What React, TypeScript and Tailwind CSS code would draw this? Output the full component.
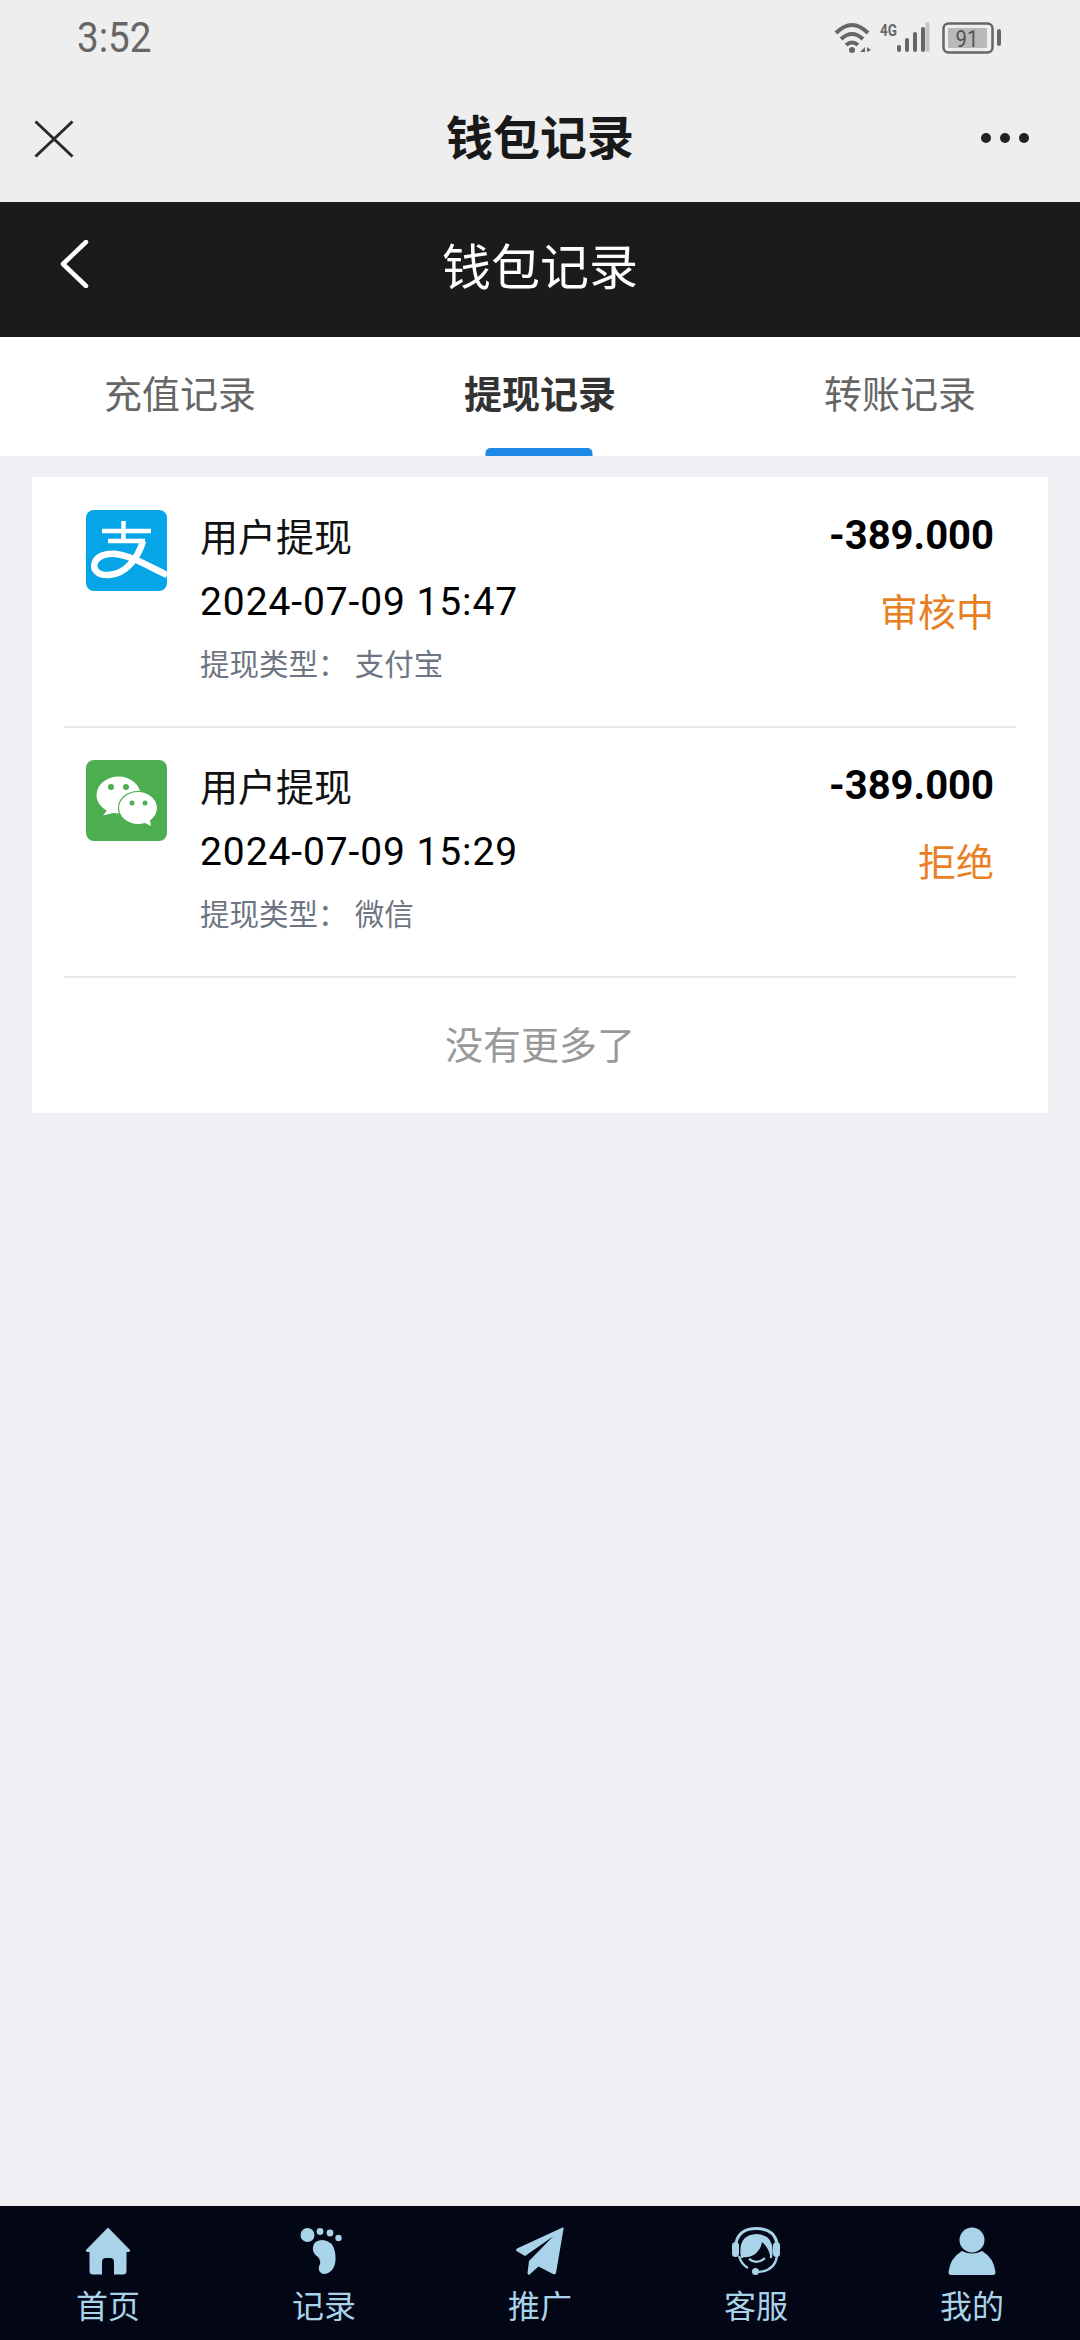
const SANS = "font-['Roboto','Noto_Sans_CJK_SC',sans-serif]";

function Alipay() {
  return (
    <svg viewBox="0 0 81 81" className="w-[81px] h-[81px] shrink-0 mt-[32px]">
      <rect width="81" height="81" rx="8" fill="#06a5e8" />
      <path d="M16 21H65M37.500 11V32M22 31H59" stroke="#fff" strokeWidth="4.500" fill="none" />
      <path d="M57 31C52 48 40 64 23 65C12 65.500 7 60 8.500 54C10 46 20 43 30 44C46 46 62 56 81 65" stroke="#fff" strokeWidth="6.500" fill="none" />
    </svg>
  );
}

function Wechat() {
  return (
    <svg viewBox="0 0 81 81" className="w-[81px] h-[81px] shrink-0 mt-[32px]">
      <rect width="81" height="81" rx="8" fill="#4cae50" />
      <ellipse cx="32.500" cy="35" rx="22" ry="18.500" fill="#fff" />
      <path d="M22 49L17 55.500L31 52Z" fill="#fff" />
      <ellipse cx="52" cy="48" rx="19.500" ry="16.500" fill="#fff" stroke="#4cae50" strokeWidth="1.200" />
      <path d="M57 62L65 66L63.500 58Z" fill="#fff" />
      <circle cx="25" cy="27" r="3" fill="#4cae50" />
      <circle cx="40" cy="27" r="3" fill="#4cae50" />
      <circle cx="46" cy="43" r="2.500" fill="#4cae50" />
      <circle cx="59" cy="43" r="2.500" fill="#4cae50" />
    </svg>
  );
}

function HomeIcon() {
  return (
    <svg viewBox="0 0 48 48" className="w-[48px] h-[48px]">
      <path d="M24 0.500L46 23Q46.500 25 44 25H42.500V44Q42.500 47.500 39 47.500H30V35Q30 31 26 31H22Q18 31 18 35V47.500H9Q5.500 47.500 5.500 44V25H4Q1.500 25 2 23Z" fill="#a8d3e8" />
    </svg>
  );
}
function FootIcon() {
  return (
    <svg viewBox="0 0 48 48" className="w-[48px] h-[48px]">
      <circle cx="7.500" cy="8" r="7" fill="#a8d3e8" />
      <circle cx="20" cy="4.500" r="3.400" fill="#a8d3e8" />
      <circle cx="30" cy="6" r="3.400" fill="#a8d3e8" />
      <circle cx="38.500" cy="11" r="3.200" fill="#a8d3e8" />
      <path d="M13 20Q14 13 23 13Q33 14 35 25Q37 37 32 43Q26 49 21 46Q17 43 20 37Q21 33 18 30Q12 26 13 20Z" fill="#a8d3e8" />
    </svg>
  );
}
function PlaneIcon() {
  return (
    <svg viewBox="0 0 48 48" className="w-[48px] h-[48px]">
      <path d="M46.500 0.500Q48 0 47.500 2L40 46Q39.500 48 37 47L22.500 39.500L13 48Q11.500 47.500 11.500 46L13 34L37 9.500L9 29L0.500 24Q-0.500 22.500 1 21.500Z" fill="#a8d3e8" />
    </svg>
  );
}
function ServiceIcon() {
  return (
    <svg viewBox="0 0 48 48" className="w-[48px] h-[48px]">
      <path d="M4 16Q7 1.500 24.500 1.500Q42 1.500 45 16" stroke="#a8d3e8" strokeWidth="3" fill="none" />
      <path d="M9 31Q5 8 24.500 7Q44 8 40 31Z" fill="#a8d3e8" />
      <path d="M11 30Q21 31 26 24Q29 21 30 15Q36 20 38 28Q38 42 25 43Q14 42 11 30Z" fill="#030615" />
      <path d="M17 32Q25 38 33 31" stroke="#a8d3e8" strokeWidth="2.200" fill="none" />
      <rect x="0" y="15" width="7" height="15" rx="3.500" fill="#a8d3e8" />
      <rect x="41" y="15" width="7" height="15" rx="3.500" fill="#a8d3e8" />
      <path d="M45 29Q43 44 26 45" stroke="#a8d3e8" strokeWidth="2.200" fill="none" />
      <path d="M7 29Q9 37 16 41" stroke="#a8d3e8" strokeWidth="2.200" fill="none" />
      <circle cx="23.500" cy="44.500" r="3.500" fill="#a8d3e8" />
    </svg>
  );
}
function UserIcon() {
  return (
    <svg viewBox="0 0 48 48" className="w-[48px] h-[48px]">
      <circle cx="24" cy="13" r="12.500" fill="#a8d3e8" />
      <path d="M14 24Q24 29 34 24Q46 31 47.500 45Q47.500 48 45 48H3Q0.500 48 0.500 45Q2 31 14 24Z" fill="#a8d3e8" />
    </svg>
  );
}

function Record({ time, kind, status, Icon }: { time: string; kind: string; status: string; Icon: () => React.JSX.Element }) {
  return (
    <div className="flex h-[250px] mx-[32px] border-b-2 border-[#e7e8ea] pl-[22px] pr-[22px]">
      <Icon />
      <div className="ml-[33px] flex-1 flex flex-col items-start">
        <div className="mt-[40px] h-[40px] text-[38px] leading-[40px] text-[#111]">用户提现</div>
        <div className="mt-[24px] h-[40px] text-[39px] leading-[40px] text-black tracking-[0.9px]">{time}</div>
        <div className="mt-[27px] h-[32px] text-[29.500px] leading-[32px] text-[#6e7582]">提现类型： {kind}</div>
      </div>
      <div className="flex flex-col items-end">
        <div className="mt-[38px] h-[40px] text-[40px] leading-[40px] font-bold text-black">-389.000</div>
        <div className="mt-[35px] h-[44px] text-[38px] leading-[44px] text-[#e87f24]">{status}</div>
      </div>
    </div>
  );
}

function NavItem({ label, Icon }: { label: string; Icon: () => React.JSX.Element }) {
  return (
    <div className="flex-1 flex flex-col items-center pt-[21px]">
      <Icon />
      <div className="mt-[14px] text-[32px] leading-[36px] text-[#a8d3e8]">{label}</div>
    </div>
  );
}

export default function App() {
  return (
    <div className={`w-[1080px] h-[2340px] flex flex-col bg-[#efeff4] ${SANS}`}>
      <div className="h-[202px] bg-[#eeeeee] shrink-0 flex flex-col">
        <div className="h-[76px] flex items-center justify-between pl-[77px] pr-[76px]">
          <span className="text-[42px] leading-[42px] text-[#666] font-['Roboto',sans-serif] scale-x-[0.92] origin-left">3:52</span>
          <svg viewBox="830 18 174 38" className="w-[174px] h-[38px]">
            <path d="M836 32Q852 16 868 32M841 38Q852 28 863 38M846 44Q852 39 858 44" stroke="#666" strokeWidth="4" fill="none" />
            <circle cx="852" cy="49" r="3" fill="#666" />
            <path d="M860 51L865 46V51ZM867 46L871 49L867 51Z" fill="#666" />
            <text x="880" y="35" fontSize="17" fontWeight="700" fill="#666" textLength="17" lengthAdjust="spacingAndGlyphs" fontFamily="Roboto, sans-serif">4G</text>
            <rect x="897" y="44" width="4" height="7" rx="2" fill="#666" />
            <rect x="905" y="37" width="4" height="14" rx="2" fill="#666" />
            <rect x="913" y="31" width="4" height="20" rx="2" fill="#666" />
            <rect x="921" y="26" width="4" height="25" rx="2" fill="#666" />
            <rect x="925.500" y="21" width="4" height="30" rx="2" fill="#c4c4c4" />
            <rect x="943.500" y="22.500" width="49" height="29" rx="5" stroke="#666" strokeWidth="2.500" fill="none" />
            <rect x="948" y="27" width="39" height="20" rx="1.500" fill="#b9b9b9" />
            <text x="967" y="46" fontSize="24" fill="#555" textAnchor="middle" textLength="23" lengthAdjust="spacingAndGlyphs" fontFamily="Roboto, sans-serif">91</text>
            <rect x="997" y="28" width="4" height="17" rx="2" fill="#666" />
          </svg>
        </div>
        <div className="h-[126px] flex items-center justify-between pb-[1px]">
          <div className="w-[150px] pl-[34px]">
            <svg viewBox="0 0 40 38" className="w-[40px] h-[38px]"><path d="M1.500 1.500L38.500 36.500M38.500 1.500L1.500 36.500" stroke="#2a2a2a" strokeWidth="3" fill="none" /></svg>
          </div>
          <span className="text-[47px] leading-[50px] font-bold text-[#191919]">钱包记录</span>
          <div className="w-[150px] pr-[50px] flex justify-end">
            <svg viewBox="0 0 50 12" className="w-[50px] h-[12px] -translate-y-[1px]"><circle cx="6" cy="6" r="5" fill="#222" /><circle cx="25" cy="6" r="5" fill="#222" /><circle cx="44" cy="6" r="5" fill="#222" /></svg>
          </div>
        </div>
      </div>

      <div className="h-[135px] bg-[#1b1b1b] shrink-0 relative flex items-center justify-center">
        <svg viewBox="0 0 30 48" className="absolute left-[59px] top-[38px] w-[30px] h-[48px]"><path d="M27 2L4 24L27 46" stroke="#fff" strokeWidth="4.500" strokeLinecap="round" strokeLinejoin="round" fill="none" /></svg>
        <span className="text-[49px] leading-[52px] text-white pb-[1px]">钱包记录</span>
      </div>

      <div className="h-[119px] bg-white shrink-0 flex">
        <div className="flex-1 flex items-center justify-center text-[38px] leading-[40px] text-[#666] pb-[3px]">充值记录</div>
        <div className="flex-1 flex items-center justify-center text-[38px] leading-[40px] font-bold text-[#333] relative pb-[3px]">
          提现记录
          <div className="absolute bottom-0 left-1/2 -translate-x-1/2 -ml-px w-[107px] h-[8px] rounded-t-[5px] bg-[#1e88e5]" />
        </div>
        <div className="flex-1 flex items-center justify-center text-[38px] leading-[40px] text-[#666] pb-[3px]">转账记录</div>
      </div>

      <div className="mt-[21px] mx-[32px] pt-[1px] bg-white flex flex-col">
        <Record time="2024-07-09 15:47" kind="支付宝" status="审核中" Icon={Alipay} />
        <Record time="2024-07-09 15:29" kind="微信" status="拒绝" Icon={Wechat} />
        <div className="h-[135px] flex items-center justify-center text-[38px] leading-[40px] text-[#999]">没有更多了</div>
      </div>

      <div className="mt-auto h-[134px] bg-[#030615] shrink-0 flex">
        <NavItem label="首页" Icon={HomeIcon} />
        <NavItem label="记录" Icon={FootIcon} />
        <NavItem label="推广" Icon={PlaneIcon} />
        <NavItem label="客服" Icon={ServiceIcon} />
        <NavItem label="我的" Icon={UserIcon} />
      </div>
    </div>
  );
}
